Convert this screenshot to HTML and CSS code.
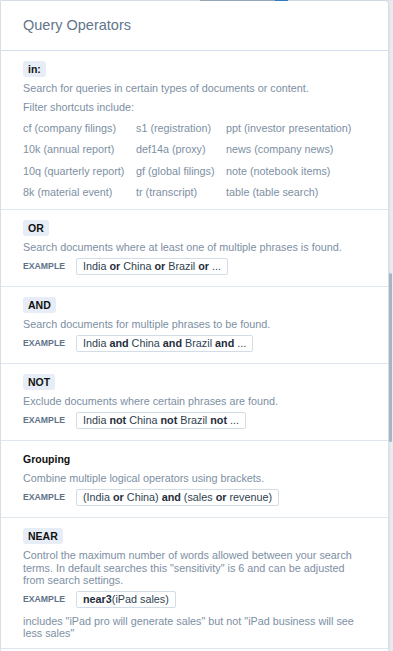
FILE: index.html
```html
<!DOCTYPE html>
<html lang="en">
  <head>
    <meta charset="UTF-8" />
    <meta name="viewport" content="width=device-width, initial-scale=1.0" />
    <title>Query Operators</title>
    <link rel="stylesheet" href="styles.css">
  </head>
  <body>
    <div class="page-edge"></div>
    <div class="panel">
      <div class="panel-header">Query Operators</div>

      <div class="op op-first">
        <span class="op-name">in:</span>
        <p class="op-desc">Search for queries in certain types of documents or content.</p>
        <p class="op-desc op-desc-second">Filter shortcuts include:</p>
        <div class="shortcuts">
          <span>cf (company filings)</span>
          <span>s1 (registration)</span>
          <span>ppt (investor presentation)</span>
          <span>10k (annual report)</span>
          <span>def14a (proxy)</span>
          <span>news (company news)</span>
          <span>10q (quarterly report)</span>
          <span>gf (global filings)</span>
          <span>note (notebook items)</span>
          <span>8k (material event)</span>
          <span>tr (transcript)</span>
          <span>table (table search)</span>
        </div>
      </div>

      <div class="op">
        <span class="op-name">OR</span>
        <p class="op-desc">Search documents where at least one of multiple phrases is found.</p>
        <div class="example">
          <span class="example-label">EXAMPLE</span>
          <span class="example-box">India <b>or</b> China <b>or</b> Brazil <b>or</b> ...</span>
        </div>
      </div>

      <div class="op">
        <span class="op-name">AND</span>
        <p class="op-desc">Search documents for multiple phrases to be found.</p>
        <div class="example">
          <span class="example-label">EXAMPLE</span>
          <span class="example-box">India <b>and</b> China <b>and</b> Brazil <b>and</b> ...</span>
        </div>
      </div>

      <div class="op">
        <span class="op-name">NOT</span>
        <p class="op-desc">Exclude documents where certain phrases are found.</p>
        <div class="example">
          <span class="example-label">EXAMPLE</span>
          <span class="example-box">India <b>not</b> China <b>not</b> Brazil <b>not</b> ...</span>
        </div>
      </div>

      <div class="op">
        <span class="op-name plain">Grouping</span>
        <p class="op-desc">Combine multiple logical operators using brackets.</p>
        <div class="example">
          <span class="example-label">EXAMPLE</span>
          <span class="example-box">(India <b>or</b> China) <b>and</b> (sales <b>or</b> revenue)</span>
        </div>
      </div>

      <div class="op op-last">
        <span class="op-name">NEAR</span>
        <p class="op-desc">Control the maximum number of words allowed between your search terms. In default searches this "sensitivity" is 6 and can be adjusted from search settings.</p>
        <div class="example">
          <span class="example-label">EXAMPLE</span>
          <span class="example-box"><b>near3</b>(iPad sales)</span>
        </div>
        <p class="op-desc op-note">includes "iPad pro will generate sales" but not "iPad business will see less sales"</p>
      </div>

      <div class="scroll-thumb"></div>
    </div>
  </body>
</html>
```

FILE: styles.css
```css
html,
body {
  margin: 0;
  height: 100%;
  overflow: hidden;
  font-family: 'Liberation Sans', Arial, sans-serif;
  background: #e8ecf0;
}

.page-edge {
  height: 1px;
  background: linear-gradient(
    to right,
    #e6ebf1 0,
    #e6ebf1 200px,
    #9fb0c2 200px,
    #9fb0c2 275px,
    #2f7fc6 275px,
    #2f7fc6 288px,
    #dfe6ef 288px
  );
}

.panel {
  position: relative;
  width: 387px;
  height: 650px;
  margin-left: 1px;
  background: #fff;
  border-radius: 0 3px 0 0;
  box-shadow: 0 0 3px rgba(60, 80, 110, 0.25);
}

.panel-header {
  box-sizing: border-box;
  height: 50px;
  padding: 14px 22px 0;
  font-size: 14.5px;
  line-height: 20px;
  color: #62768c;
  border-bottom: 1px solid #d3dfea;
}

.op {
  padding: 10px 22px 11.4px;
  border-bottom: 1px solid #dfe6ee;
}

.op-first {
  padding-bottom: 5.6px;
}

.op-last {
  padding-bottom: 8px;
}

.op-name {
  display: block;
  width: fit-content;
  padding: 0 5px;
  font-size: 10.5px;
  font-weight: bold;
  line-height: 16px;
  color: #111;
  background: #e6edf6;
  border-radius: 3px;
}

.op-name.plain {
  padding: 0;
  background: none;
}

.op-desc {
  margin: 5px 0 0;
  font-size: 10.8px;
  line-height: 12.6px;
  color: #7d8fa3;
}

.op-desc-second {
  margin-top: 6px;
}

.op-note {
  margin-top: 7px;
}

.shortcuts {
  display: grid;
  grid-template-columns: 113px 90px 1fr;
  margin-top: 5px;
  font-size: 10.8px;
  line-height: 21.3px;
  color: #7d8fa3;
  white-space: nowrap;
}

.example {
  display: flex;
  align-items: center;
  margin-top: 4px;
}

.example-label {
  width: 53px;
  font-size: 8.7px;
  font-weight: bold;
  color: #5e7288;
}

.example-box {
  box-sizing: border-box;
  height: 17px;
  padding: 0 6px;
  font-size: 10.8px;
  line-height: 15px;
  color: #2f3f50;
  border: 1px solid #d3dde8;
  border-radius: 2px;
  white-space: nowrap;
}

.example-box b {
  color: #1f2d3b;
}

.scroll-thumb {
  position: absolute;
  top: 272px;
  right: -4px;
  width: 3px;
  height: 169px;
  background: #a6b4c4;
  border-radius: 2px;
}
```
